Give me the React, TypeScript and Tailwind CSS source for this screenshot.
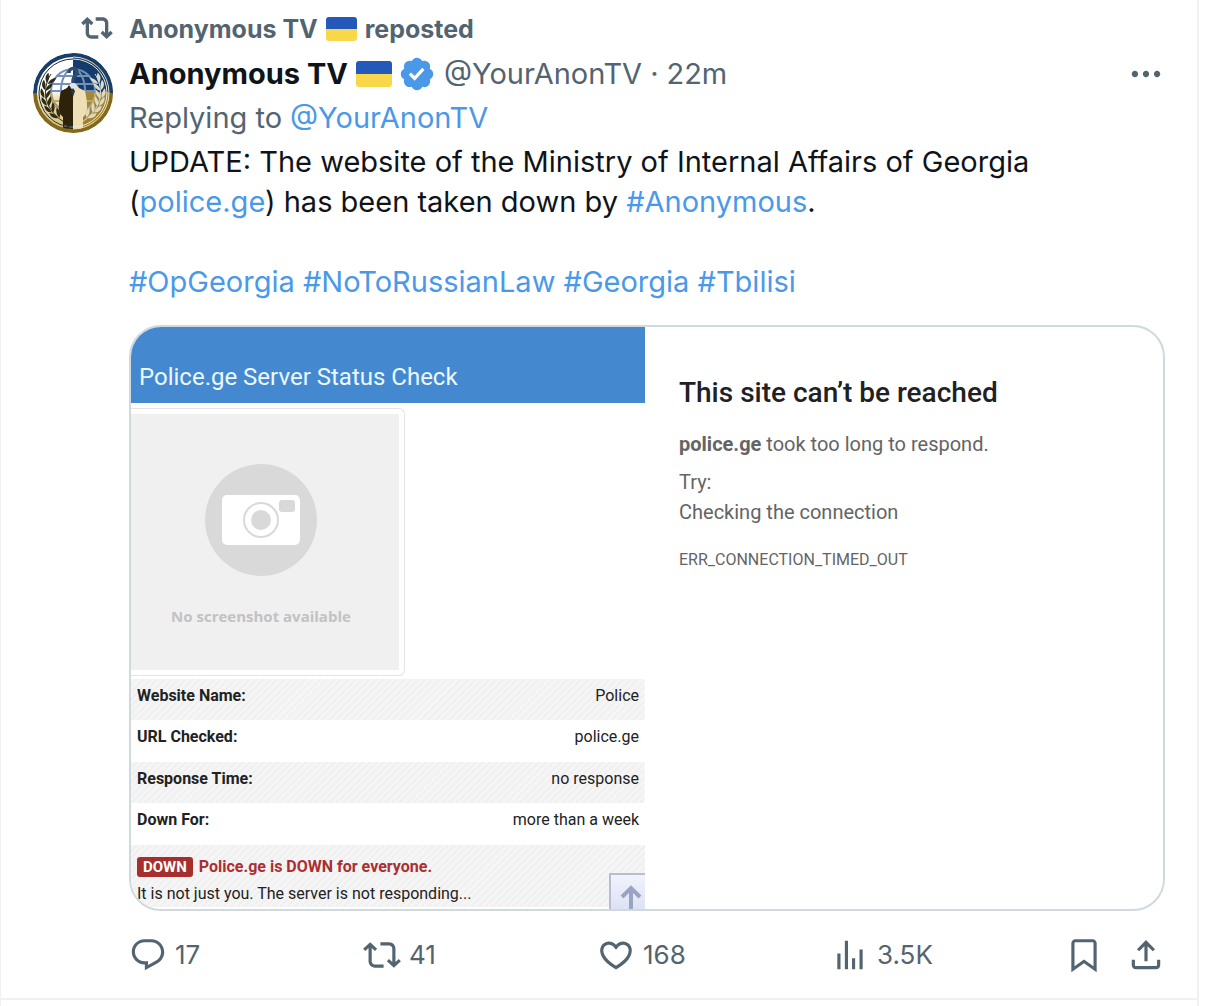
import React from 'react';

// 24x24 icon outlines
const ICONS = {
    repostBold: 'M4.75 3.79l4.603 4.3-1.706 1.82L6 8.38v7.37c0 .97.784 1.75 1.75 1.75H13V20H7.75c-2.347 0-4.25-1.9-4.25-4.25V8.38L1.853 9.91.147 8.09l4.603-4.3zm11.5 2.71H11V4h5.25c2.347 0 4.25 1.9 4.25 4.25v7.37l1.647-1.53 1.706 1.82-4.603 4.3-4.603-4.3 1.706-1.82L18 15.62V8.25c0-.97-.784-1.75-1.75-1.75z',
    repost: 'M4.5 3.88l4.432 4.14-1.364 1.46L5.5 7.55V16c0 1.1.896 2 2 2H13v2H7.5c-2.209 0-4-1.79-4-4V7.55L1.432 9.48.068 8.02 4.5 3.88zM16.5 6H11V4h5.5c2.209 0 4 1.79 4 4v8.45l2.068-1.93 1.364 1.46-4.432 4.14-4.432-4.14 1.364-1.46 2.068 1.93V8c0-1.1-.896-2-2-2z',
    reply: 'M1.751 10c0-4.42 3.584-8 8.005-8h4.366c4.49 0 8.129 3.64 8.129 8.13 0 2.96-1.607 5.68-4.196 7.11l-8.054 4.46v-3.69h-.067c-4.49.1-8.183-3.51-8.183-8.01zm8.005-6c-3.317 0-6.005 2.69-6.005 6 0 3.37 2.77 6.08 6.138 6.01l.351-.01h1.761v2.3l5.087-2.81c1.951-1.08 3.163-3.13 3.163-5.36 0-3.39-2.744-6.13-6.129-6.13H9.756z',
    like: 'M16.697 5.5c-1.222-.06-2.679.51-3.89 2.16l-.805 1.09-.806-1.09C9.984 6.01 8.526 5.44 7.304 5.5c-1.243.07-2.349.78-2.91 1.91-.552 1.12-.633 2.78.479 4.82 1.074 1.97 3.257 4.27 7.129 6.61 3.87-2.34 6.052-4.64 7.126-6.61 1.111-2.04 1.03-3.7.477-4.82-.561-1.13-1.666-1.84-2.908-1.91zm4.187 7.69c-1.351 2.48-4.001 5.12-8.379 7.67l-.503.3-.504-.3c-4.379-2.55-7.029-5.19-8.382-7.67-1.36-2.5-1.41-4.86-.514-6.67.887-1.79 2.647-2.91 4.601-3.01 1.651-.09 3.368.56 4.798 2.01 1.429-1.45 3.146-2.1 4.796-2.01 1.954.1 3.714 1.22 4.601 3.01.896 1.81.846 4.17-.514 6.67z',
    views: 'M8.75 21V3h2v18h-2zM18 21V8.5h2V21h-2zM4 21l.004-10h2L6 21H4zm9.248 0v-7h2v7h-2z',
    bookmark: 'M4 4.5C4 3.12 5.119 2 6.5 2h11C18.881 2 20 3.12 20 4.5v18.44l-8-5.71-8 5.71V4.5zM6.5 4c-.276 0-.5.22-.5.5v14.56l6-4.29 6 4.29V4.5c0-.28-.224-.5-.5-.5h-11z',
    share: 'M12 2.59l5.7 5.7-1.41 1.42L13 6.41V16h-2V6.41l-3.3 3.3-1.41-1.42L12 2.59zM21 15l-.02 3.51c0 1.38-1.12 2.49-2.5 2.49H5.5C4.11 21 3 19.88 3 18.5V15h2v3.5c0 .28.22.5.5.5h12.98c.28 0 .5-.22.5-.5L19 15h2z',
    more: 'M3 12c0-1.1.9-2 2-2s2 .9 2 2-.9 2-2 2-2-.9-2-2zm9 2c1.1 0 2-.9 2-2s-.9-2-2-2-2 .9-2 2 .9 2 2 2zm7 0c1.1 0 2-.9 2-2s-.9-2-2-2-2 .9-2 2 .9 2 2 2z',
};

const VERIFIED = 'M20.396 11c-.018-.646-.215-1.275-.57-1.816-.354-.54-.852-.972-1.438-1.246.223-.607.27-1.264.14-1.897-.131-.634-.437-1.218-.882-1.687-.47-.445-1.053-.75-1.687-.882-.633-.13-1.29-.083-1.897.14-.273-.587-.704-1.086-1.245-1.44S11.647 1.62 11 1.604c-.646.017-1.273.213-1.813.568s-.969.854-1.24 1.44c-.608-.223-1.267-.272-1.902-.14-.635.13-1.22.436-1.69.882-.445.47-.749 1.055-.878 1.688-.13.633-.08 1.29.144 1.896-.587.274-1.087.705-1.443 1.245-.356.54-.555 1.17-.574 1.817.02.647.218 1.276.574 1.817.356.54.856.972 1.443 1.245-.224.606-.274 1.263-.144 1.896.13.634.433 1.218.877 1.688.47.443 1.054.747 1.687.878.633.132 1.29.084 1.897-.136.274.586.705 1.084 1.246 1.439.54.354 1.17.551 1.816.569.647-.016 1.276-.213 1.817-.567s.972-.854 1.245-1.44c.604.239 1.266.296 1.903.164.636-.132 1.22-.447 1.68-.907.46-.46.776-1.044.908-1.681s.075-1.299-.165-1.903c.586-.274 1.084-.705 1.439-1.246.354-.54.551-1.17.569-1.816zM9.662 14.85l-3.429-3.428 1.293-1.302 2.072 2.072 4.4-4.794 1.347 1.246z';

const Icon = ({ name, className = 'size-[38px]' }: { name: keyof typeof ICONS; className?: string }) => (
    <svg viewBox="0 0 24 24" fill="currentColor" aria-hidden="true" className={`shrink-0 ${className}`}>
        <path d={ICONS[name]} />
    </svg>
);

const Flag = ({ className }: { className: string }) => (
    <span
        role="img"
        aria-label="Ukraine"
        className={`shrink-0 rounded-[3px] bg-linear-to-b from-[#2459b9] from-50% to-[#f8d84a] to-50% ${className}`}
    />
);

const LEAVES = [
    [15, 27, 20], [12, 34, 8], [11, 42, -5], [13, 50, -20], [17, 57, -35], [23, 63, -50],
];

const Laurel = ({ color }: { color: string }) => (
    <g fill={color} stroke="none">
        <path d="M18 21C8 36 11 58 33 70" fill="none" stroke={color} strokeWidth="1" />
        {LEAVES.map(([x, y, angle]) => (
            <g key={y} transform={`translate(${x} ${y}) rotate(${angle})`}>
                <path d="M0 3C-4 0-4-4-2-7C0-4 1-1 0 3z" />
                <path d="M1 4C1 0 3-3 7-5C7-1 5 2 1 4z" />
            </g>
        ))}
    </g>
);

const Avatar = () => (
    <svg viewBox="0 0 80 80" role="img" aria-label="Anonymous TV" className="size-20 shrink-0 rounded-full">
        <defs>
            <linearGradient id="gold" x1="0" y1="0" x2="0" y2="1">
                <stop offset="0" stopColor="#a5883c" />
                <stop offset="1" stopColor="#a37c1c" />
            </linearGradient>
            <linearGradient id="pale" x1="0" y1="0" x2="0" y2="1">
                <stop offset="0.45" stopColor="#ffffff" />
                <stop offset="0.55" stopColor="#efe4bd" />
                <stop offset="1" stopColor="#d3b968" />
            </linearGradient>
        </defs>
        <rect width="40" height="80" fill="url(#pale)" />
        <rect x="40" width="40" height="39" fill="#133b6b" />
        <rect x="40" y="39" width="40" height="41" fill="url(#gold)" />
        <g fill="none" strokeWidth="2">
            <g stroke="#7391b8">
                <circle cx="40" cy="38" r="22" />
                <ellipse cx="40" cy="38" rx="12" ry="22" />
                <path d="M19 31h42M23 23h34M18 38h44" />
            </g>
            <path d="M18 40a22 22 0 0 0 44 0M20 48h40" stroke="#c2a855" />
        </g>
        <Laurel color="#2d2b16" />
        <g transform="translate(80 0) scale(-1 1)">
            <Laurel color="#dcdac8" />
        </g>
        <path d="M40 34l-4-2-2 3-6 3c-2 9-3 17-1 23l3 3v13h10z" fill="#2e220a" />
        <path d="M40 34l4-2 2 3 6 3c2 9 3 17 1 23l-3 3v13h-10z" fill="#efdfb6" />
        <path d="M36 32l4 6 4-6-4-3z" fill="#dfe7ee" />
        <path d="M40 35l-2 3 2 6 2-6z" fill="#23364a" />
        <path d="M36 20c0-6 8-6 8-1 0 4-4 4-4 8v3" fill="none" stroke="#2b4b76" strokeWidth="3.5" />
        <g fill="none">
            <circle cx="40" cy="40" r="34" stroke="#efe9d2" strokeWidth="1" />
            <path d="M2 40a38 38 0 0 1 76 0" stroke="#1a3e6a" strokeWidth="4" />
            <path d="M2 40a38 38 0 0 0 76 0" stroke="#83681e" strokeWidth="4" />
            <path d="M40 4a36 36 0 0 1 0 72" stroke="#e9dfb9" strokeWidth="1" />
            <path d="M40 6a34 34 0 0 0 0 68" stroke="#1f2f38" strokeWidth="1" />
        </g>
    </svg>
);

const STATUS_ROWS = [
    { label: 'Website Name:', value: 'Police' },
    { label: 'URL Checked:', value: 'police.ge' },
    { label: 'Response Time:', value: 'no response' },
    { label: 'Down For:', value: 'more than a week' },
];

const STRIPES = 'bg-[repeating-linear-gradient(135deg,#f5f5f5_0_3px,#f0f0f0_3px_5px)]';

const StatusCheck = () => (
    <div className="relative min-w-0 pb-0.5 text-base leading-5 text-[#222]">
        <h2 className="flex h-[76px] items-end bg-[#4489d0] px-2 pb-2.5 text-2xl leading-8 text-[#ecf8ff]">
            Police.ge Server Status Check
        </h2>
        <div className="mt-[5px] mb-[3px] mr-60 rounded-r-md border border-l-0 border-[#e4e4e4] py-[5px] pr-[5px]">
            <div className="flex h-64 flex-col items-center bg-[#f0f0f0] pt-[50px] pr-2">
                <svg viewBox="0 0 112 112" aria-hidden="true" className="size-28">
                    <circle cx="56" cy="56" r="56" fill="#d9d9d9" />
                    <rect x="17" y="31" width="78" height="50" rx="5" fill="#fff" />
                    <circle cx="56" cy="56" r="17" fill="none" stroke="#d9d9d9" strokeWidth="2" />
                    <circle cx="56" cy="56" r="10" fill="#d9d9d9" />
                    <rect x="74" y="36" width="16" height="12" rx="3" fill="#d9d9d9" />
                </svg>
                <p className="mt-[30px] font-['Open_Sans',sans-serif] text-[15px] font-bold text-[#c2c2c2]">
                    No screenshot available
                </p>
            </div>
        </div>
        <table className="w-full">
            <tbody>
                {STATUS_ROWS.map((row, i) => (
                    <tr key={row.label} className={i % 2 === 0 ? `h-[41px] ${STRIPES}` : 'h-[42px]'}>
                        <th scope="row" className="pb-2 pl-1.5 text-left font-bold">{row.label}</th>
                        <td className="pb-2 pr-1.5 text-right">{row.value}</td>
                    </tr>
                ))}
            </tbody>
        </table>
        <div className={`pt-3 pb-[3px] pl-1.5 ${STRIPES}`}>
            <p className="flex items-center gap-1.5 font-bold text-[#ab2f30]">
                <span className="rounded-[3px] bg-[#a62f2d] px-1.5 text-[15px] text-white">DOWN</span>
                Police.ge is DOWN for everyone.
            </p>
            <p className="mt-[7px]">It is not just you. The server is not responding...</p>
        </div>
        <button
            type="button"
            aria-label="Back to top"
            className="absolute right-0 bottom-0 h-9 w-9 border-2 border-r-0 border-b-0 border-[#b9bcd3] bg-linear-to-b from-[#f1f3fb] to-[#dde2f4] pt-2.5 pl-2"
        >
            <svg viewBox="0 0 24 24" aria-hidden="true" className="size-6" fill="none" stroke="#9ba3c4" strokeWidth="4">
                <path d="M12 24V4M3 12l9-9 9 9" />
            </svg>
        </button>
    </div>
);

const SiteError = () => (
    <div className="min-w-0 pt-12 pl-[30px] text-xl leading-[30px] text-[#646464]">
        <h2 className="text-[28px] leading-9 font-medium text-[#202124]">This site can’t be reached</h2>
        <p className="mt-[18px]"><strong>police.ge</strong> took too long to respond.</p>
        <p className="mt-2">Try:</p>
        <p>Checking the connection</p>
        <p className="mt-[18px] text-base leading-[30px]">ERR_CONNECTION_TIMED_OUT</p>
    </div>
);

const Action = ({ icon, count, label }: { icon: keyof typeof ICONS; count: string; label: string }) => (
    <div className="flex flex-1">
        <button type="button" aria-label={`${count} ${label}`} className="flex items-center gap-2 cursor-pointer">
            <Icon name={icon} />
            <span>{count}</span>
        </button>
    </div>
);

const TagLink = ({ children }: { children: string }) => (
    <a href="#" className="text-[#4a99e9] hover:underline">{children}</a>
);

export default function App() {
    return (
        <main className="mr-[21px] min-h-screen border-l border-r-2 border-[#eff1f2] bg-white font-['Inter',sans-serif] text-[#0f1419]">
            <article className="border-b-2 border-[#eff1f2] pt-3 pr-8 pb-6 pl-8">
                <div className="flex h-10 items-start gap-4 pl-12 text-[25px] leading-[34px] font-bold text-[#536471]">
                    <Icon name="repostBold" className="size-8" />
                    <a href="#" className="flex items-center gap-2 hover:underline">
                        Anonymous TV <Flag className="h-6 w-[31px]" /> reposted
                    </a>
                </div>
                <div className="flex gap-4 text-[29px]">
                    <a href="#" className="h-20 shrink-0 pt-px"><Avatar /></a>
                    <div className="min-w-0 flex-1">
                        <header className="flex h-11 items-center text-[#536471]">
                            <a href="#" className="flex items-center gap-2 font-bold text-[#0f1419] hover:underline">
                                Anonymous TV <Flag className="h-[26px] w-9" />
                            </a>
                            <svg viewBox="0 0 22 22" role="img" aria-label="Verified account" className="ml-1.5 size-[38px] shrink-0">
                                <path d={VERIFIED} fill="#4a99e9" />
                            </svg>
                            <a href="#" className="ml-2">@YourAnonTV</a>
                            <span className="mx-2">·</span>
                            <a href="#"><time>22m</time></a>
                            <button type="button" aria-label="More" className="ml-auto cursor-pointer">
                                <Icon name="more" />
                            </button>
                        </header>
                        <p className="flex h-11 items-center gap-2 text-[#536471]">
                            Replying to <TagLink>@YourAnonTV</TagLink>
                        </p>
                        <p className="pt-0.5 leading-10">
                            UPDATE: The website of the Ministry of Internal Affairs of Georgia<br />
                            (<TagLink>police.ge</TagLink>) has been taken down by <TagLink>#Anonymous</TagLink>.<br />
                            <br />
                            <TagLink>#OpGeorgia</TagLink> <TagLink>#NoToRussianLaw</TagLink> <TagLink>#Georgia</TagLink> <TagLink>#Tbilisi</TagLink>
                        </p>
                        <div className="mt-[23px] grid grid-cols-2 gap-1 overflow-hidden rounded-[32px] border-2 border-[#cfd9de] font-['Roboto',sans-serif]">
                            <StatusCheck />
                            <SiteError />
                        </div>
                        <div className="mt-6 flex text-[26px] text-[#536471]">
                            <Action icon="reply" count="17" label="replies" />
                            <Action icon="repost" count="41" label="reposts" />
                            <Action icon="like" count="168" label="likes" />
                            <Action icon="views" count="3.5K" label="views" />
                            <div className="flex gap-6">
                                <button type="button" aria-label="Bookmark" className="cursor-pointer"><Icon name="bookmark" /></button>
                                <button type="button" aria-label="Share" className="cursor-pointer"><Icon name="share" /></button>
                            </div>
                        </div>
                    </div>
                </div>
            </article>
        </main>
    );
}
